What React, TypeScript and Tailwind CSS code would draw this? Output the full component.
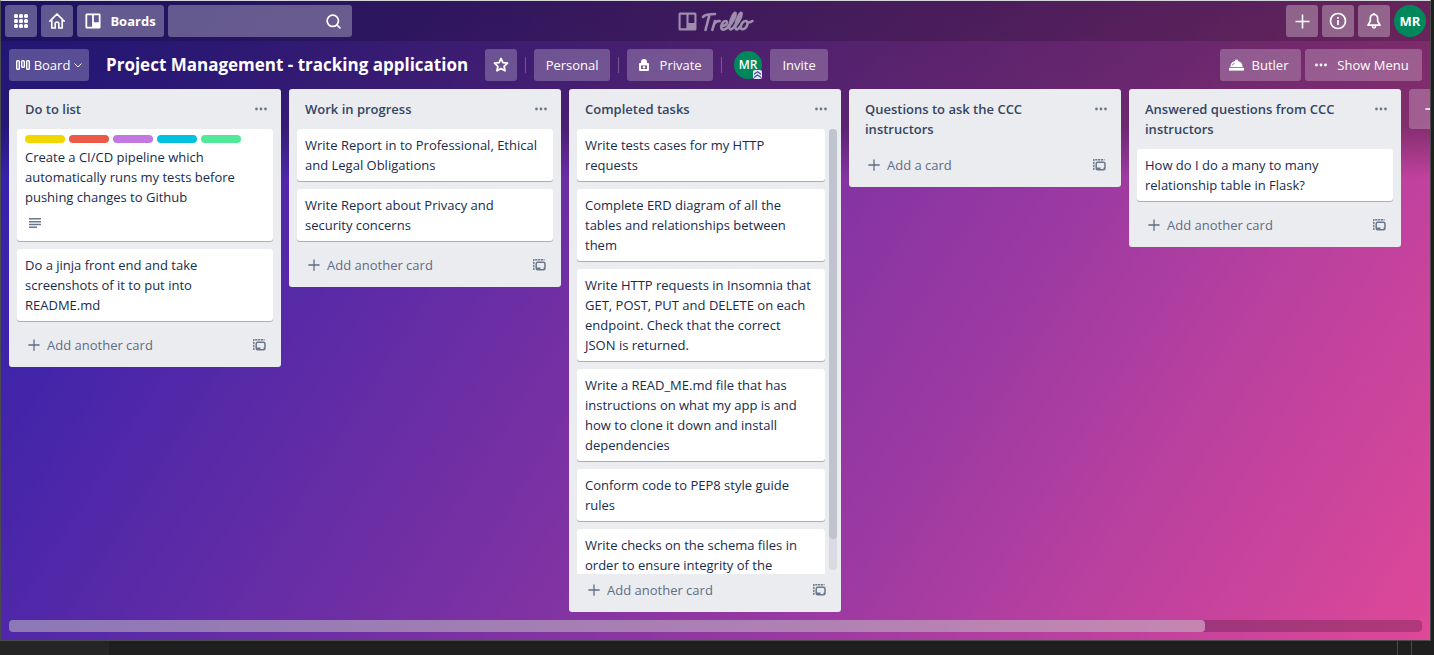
import React from "react";
import { Search } from "lucide-react";

type CardData = { text: string; labels?: string[]; description?: boolean };
type ListData = { title: string; cards: CardData[]; scroll?: boolean };

const lists: ListData[] = [
  {
    title: "Do to list",
    cards: [
      {
        text: "Create a CI/CD pipeline which automatically runs my tests before pushing changes to Github",
        labels: ["bg-[#f2d600]", "bg-[#eb5a46]", "bg-[#c377e0]", "bg-[#00c2e0]", "bg-[#51e898]"],
        description: true,
      },
      { text: "Do a jinja front end and take screenshots of it to put into README.md" },
    ],
  },
  {
    title: "Work in progress",
    cards: [
      { text: "Write Report in to Professional, Ethical and Legal Obligations" },
      { text: "Write Report about Privacy and security concerns" },
    ],
  },
  {
    title: "Completed tasks",
    scroll: true,
    cards: [
      { text: "Write tests cases for my HTTP requests" },
      { text: "Complete ERD diagram of all the tables and relationships between them" },
      { text: "Write HTTP requests in Insomnia that GET, POST, PUT and DELETE on each endpoint. Check that the correct JSON is returned." },
      { text: "Write a READ_ME.md file that has instructions on what my app is and how to clone it down and install dependencies" },
      { text: "Conform code to PEP8 style guide rules" },
      { text: "Write checks on the schema files in order to ensure integrity of the" },
    ],
  },
  { title: "Questions to ask the CCC instructors", cards: [] },
  {
    title: "Answered questions from CCC instructors",
    cards: [{ text: "How do I do a many to many relationship table in Flask?" }],
  },
];

function Plus({ className }: { className: string }) {
  return (
    <svg className={className} viewBox="0 0 16 16" fill="none" stroke="currentColor" strokeWidth="1.7" aria-hidden="true">
      <path d="M8 .5v15M.5 8h15" />
    </svg>
  );
}

function Dots({ className }: { className: string }) {
  return (
    <svg className={className} viewBox="0 0 14 4" fill="currentColor" aria-hidden="true">
      <circle cx="2.5" cy="2" r="1.4" />
      <circle cx="7" cy="2" r="1.4" />
      <circle cx="11.5" cy="2" r="1.4" />
    </svg>
  );
}

function BoardMark({ className }: { className: string }) {
  return (
    <svg className={className} viewBox="0 0 18 18" fill="currentColor" aria-hidden="true">
      <path fillRule="evenodd" d="M2 .5h14A1.5 1.5 0 0 1 17.500 2v14a1.5 1.5 0 0 1-1.500 1.500H2A1.5 1.5 0 0 1 .5 16V2A1.500 1.500 0 0 1 2 .5ZM2.500 2.500v13H8v-13Zm7.500 0v8h5.500v-8Z" />
    </svg>
  );
}

function TemplateIcon() {
  return (
    <svg className="h-3 w-[13px]" viewBox="0 0 13 12" fill="none" stroke="currentColor" aria-hidden="true">
      <rect x="3.200" y="3.200" width="8.800" height="7.600" rx="1.500" strokeWidth="1.500" />
      <path d="M3.200 9.500h4.300M10.500 9.500h1.500" strokeWidth="2.200" />
      <path d="M.8 11V.8h10.700" strokeWidth="1.400" strokeDasharray="2.200 .7" />
    </svg>
  );
}

function Card({ card }: { card: CardData }) {
  return (
    <li className="shrink-0 rounded-[3px] bg-white py-[6px] pr-3 pl-2 shadow-[0_1px_0_rgba(9,30,66,0.3)]">
      {card.labels && (
        <div className="flex gap-1 pb-1">
          {card.labels.map((c) => (
            <span key={c} className={`h-2 w-10 rounded-full ${c}`} />
          ))}
        </div>
      )}
      <a href="#card" className="block">{card.text}</a>
      {card.description && (
        <div className="flex h-7 items-center px-1 pt-1 text-[#6b778c]">
          <svg className="h-[10px] w-3" viewBox="0 0 12 10" fill="currentColor" aria-hidden="true">
            <path d="M0 0h12v1.500H0zM0 3h12v1.500H0zM0 5.700h12v1.500H0zM0 8.500h8V10H0z" />
          </svg>
        </div>
      )}
    </li>
  );
}

const footerBase = "flex shrink-0 items-start justify-between pr-[15px] pl-[19px]";

function List({ list }: { list: ListData }) {
  const roomy = list.cards.length > 0 && !list.scroll;
  return (
    <section className="flex max-h-full w-[272px] shrink-0 flex-col rounded-[3px] bg-[#ebecf0] text-[#172b4d]">
      <header className="flex items-start py-[10px] pr-3 pl-4">
        <h2 className="flex-1 pr-6 font-semibold text-[#344563]">{list.title}</h2>
        <button aria-label="List actions" className="flex h-5 w-4 items-center justify-center text-[#6b778c]">
          <Dots className="h-1 w-[14px]" />
        </button>
      </header>
      <div className={list.scroll ? "flex min-h-0 gap-1 pr-1" : "flex min-h-0 pr-2"}>
        <ul className={list.cards.length ? "flex min-w-0 flex-1 flex-col gap-2 overflow-hidden pb-[1px] pl-2" : "hidden"}>
          {list.cards.map((c) => (
            <Card key={c.text} card={c} />
          ))}
        </ul>
        {list.scroll && (
          <div className="mb-1 w-2 shrink-0 rounded-full bg-[#dadbe2]">
            <div className="h-[93%] rounded-full bg-[#bfc4ce]" />
          </div>
        )}
      </div>
      <footer className={roomy ? `${footerBase} h-[45px] pt-[13px]` : `${footerBase} h-[38px] pt-[6px]`}>
        <button className="flex items-center gap-[7px] text-[#5e6c84]">
          <Plus className="h-3 w-3" />
          {list.cards.length ? "Add another card" : "Add a card"}
        </button>
        <button aria-label="Create from template" className="flex h-5 items-center text-[#6b778c]">
          <TemplateIcon />
        </button>
      </footer>
    </section>
  );
}

const headerButton = "flex h-8 shrink-0 items-center justify-center rounded-[3px] bg-white/30 text-white";
const boardButton = "flex h-8 shrink-0 items-center justify-center rounded-[3px] bg-white/24 text-white";

export default function App() {
  return (
    <div className="flex h-screen flex-col overflow-hidden bg-[#1f1f1f] font-['Open_Sans',sans-serif] text-[13px] leading-5">
      <div className="mr-[3px] flex min-h-0 flex-1 flex-col border-t border-r border-b border-l border-[#4b4b4b] border-t-[#d5d5dc] bg-[linear-gradient(180deg,rgba(0,0,0,0.34)_0,rgba(0,0,0,0.3)_125px,rgba(0,0,0,0)_178px),linear-gradient(122deg,#3020ac_0%,#4024aa_13%,#5a2aa7_28%,#7630a3_44%,#9e3aa2_67%,#b8409f_79%,#de4898_100%)]">
        <header className="flex h-10 shrink-0 items-center justify-between bg-black/15 px-1">
          <div className="flex flex-1 gap-1">
            <button aria-label="More from Atlassian" className={`${headerButton} w-8`}>
              <svg className="h-[14px] w-[14px]" viewBox="0 0 14 14" fill="currentColor" aria-hidden="true">
                {[2, 7, 12].map((y) => [2, 7, 12].map((x) => <rect key={`${x}-${y}`} x={x - 2} y={y - 2} width="4" height="4" rx="1.500" />))}
              </svg>
            </button>
            <button aria-label="Home" className={`${headerButton} w-8`}>
              <svg className="h-4 w-4" viewBox="0 0 16 16" fill="none" stroke="currentColor" strokeWidth="1.700" strokeLinejoin="round" strokeLinecap="round" aria-hidden="true">
                <path d="M.9 8.200 8 1l7.100 7.200M2.800 7v8h3.400v-4.200a1.800 1.800 0 0 1 3.600 0V15h3.400V7" />
              </svg>
            </button>
            <button className={`${headerButton} w-[87px] gap-[9px] font-bold`}>
              <BoardMark className="h-4 w-4" />
              Boards
            </button>
            <label className="flex h-8 w-[184px] items-center rounded-[3px] bg-white/30 pr-[10px] text-white">
              <input aria-label="Search" className="min-w-0 flex-1 bg-transparent px-2 outline-none" />
              <Search className="h-[17px] w-[17px]" strokeWidth={2.4} />
            </label>
          </div>
          <a href="#home" aria-label="Trello" className="flex h-8 items-center gap-1 text-white opacity-50">
            <BoardMark className="h-[19px] w-[19px]" />
            <svg className="h-[22px] w-[53px]" viewBox="0 0 53 22" fill="none" stroke="currentColor" strokeWidth="2.600" strokeLinecap="round" strokeLinejoin="round" aria-hidden="true">
              <path d="M2 7c1-1.600 3-2.200 5.500-2.500L14 4M8.500 4.700 4.500 20" />
              <path d="m14 11-2.700 8.800M13 14.300c1.600-2.400 3.400-3.800 5.700-3.200" />
              <path d="M20 16.300c3 0 6-1.800 6-3.900 0-1.900-2.600-1.700-4.200.2-2.100 2.600-2.200 7 .6 7 2.300 0 4.300-2.100 6-4.600" />
              <path d="M28 16.500c3.500-4 7.300-10.500 6.500-13.500-1.600-1.200-4.800 6.500-5.800 11-.9 4.500.2 6.500 2.300 5 1.300-.9 2.400-2.400 3.300-4" />
              <path d="M34 16.500c3.500-4 7.300-10.500 6.500-13.500-1.600-1.200-4.800 6.500-5.800 11-.9 4.500.2 6.500 2.300 5 .9-.6 1.600-1.500 2.200-2.500" />
              <path d="M45.500 11.200c-3-.9-6.200 3.300-5.700 6.300.5 2.600 3.600 2.300 5.300-.2 1.700-2.400 1.900-5.300.4-6.100.7 1.700 3.300 1.600 6-.2" />
            </svg>
          </a>
          <div className="flex flex-1 items-center justify-end gap-1">
            <button aria-label="Create" className={`${headerButton} w-8`}><Plus className="h-[15px] w-[15px]" /></button>
            <button aria-label="Information" className={`${headerButton} w-8`}>
              <svg className="h-[18px] w-[18px]" viewBox="0 0 18 18" fill="none" stroke="currentColor" strokeWidth="1.700" aria-hidden="true">
                <circle cx="9" cy="9" r="7.500" />
                <path d="M9 8v5M9 5v1.700" />
              </svg>
            </button>
            <button aria-label="Notifications" className={`${headerButton} w-8`}>
              <svg className="h-4 w-4" viewBox="0 0 16 16" fill="none" stroke="currentColor" strokeWidth="1.700" strokeLinejoin="round" aria-hidden="true">
                <path d="M8 1.500c-2.500 0-3.700 1.900-3.700 4.200v2.500L2 12.200h12l-2.300-4V5.700C11.700 3.400 10.500 1.500 8 1.500Z" />
                <path d="M6.300 13.200c.4 2.200 3 2.200 3.400 0M8 0v2" />
              </svg>
            </button>
            <button aria-label="Account" className="flex h-8 w-8 items-center justify-center rounded-full bg-[#00875a] font-bold text-white">MR</button>
          </div>
        </header>

        <nav className="flex h-12 shrink-0 items-center px-2 text-white">
          <button className={`${boardButton} w-20 gap-1`}>
            <svg className="h-[11px] w-[14px]" viewBox="0 0 14 11" fill="none" stroke="currentColor" strokeWidth="1.400" aria-hidden="true">
              <rect x=".7" y=".7" width="2.600" height="8.600" rx=".8" />
              <rect x="5.700" y=".7" width="2.600" height="6.600" rx=".8" />
              <rect x="10.700" y=".7" width="2.600" height="8.600" rx=".8" />
            </svg>
            Board
            <svg className="h-[5px] w-2" viewBox="0 0 8 5" fill="none" stroke="currentColor" aria-hidden="true"><path d="m.5.5 3.500 3.500L7.500.5" /></svg>
          </button>
          <h1 className="mr-[17px] ml-[17px] text-[17px] font-bold whitespace-nowrap">Project Management - tracking application</h1>
          <button aria-label="Star board" className={`${boardButton} w-8`}>
            <svg className="h-4 w-4" viewBox="0 0 16 16" fill="none" stroke="currentColor" strokeWidth="1.800" strokeLinejoin="round" aria-hidden="true">
              <path d="m8 1.500 1.900 4.200 4.600.5-3.400 3.100.9 4.500L8 11.500l-4 2.300.9-4.500-3.400-3.100 4.600-.5Z" />
            </svg>
          </button>
          <span className="mx-2 h-4 w-px bg-white/25" />
          <button className={`${boardButton} w-[76px]`}>Personal</button>
          <span className="mx-2 h-4 w-px bg-white/25" />
          <button className={`${boardButton} w-[86px] gap-[11px]`}>
            <svg className="h-3 w-[10px]" viewBox="0 0 10 12" fill="currentColor" aria-hidden="true">
              <path fillRule="evenodd" d="M2 4V3a3 3 0 0 1 6 0v1h1a1 1 0 0 1 1 1v6a1 1 0 0 1-1 1H1a1 1 0 0 1-1-1V5a1 1 0 0 1 1-1Zm0 2.500v3.500h6V6.500Z" />
              <circle cx="5" cy="8.200" r="1.200" />
            </svg>
            Private
          </button>
          <span className="mx-2 h-4 w-px bg-white/25" />
          <button aria-label="Board member" className="relative ml-1 flex h-7 w-7 shrink-0 items-center justify-center rounded-full bg-[#00875a] text-[12px] font-semibold">
            MR
            <svg className="absolute right-0 bottom-0 h-[9px] w-[9px]" viewBox="0 0 9 9" fill="none" stroke="#3f4ba0" strokeWidth="1.200" aria-hidden="true">
              <rect width="9" height="9" rx="2" fill="#e8e9f8" stroke="none" />
              <path d="m1 4.200 3.500-2.500L8 4.200M1 7.500 4.500 5 8 7.500" />
            </svg>
          </button>
          <button className={`${boardButton} ml-2 w-[58px]`}>Invite</button>
          <div className="ml-auto flex gap-1">
            <button className={`${boardButton} w-[81px] gap-2 pr-1`}>
              <svg className="h-[14px] w-[15px]" viewBox="0 0 16 14" fill="currentColor" aria-hidden="true">
                <path d="M1.500 9a6.500 6.500 0 0 1 5-6.300V1.500h3v1.200a6.500 6.500 0 0 1 5 6.300Z" />
                <path d="M0 10h16v3H0z" />
                <path d="M3.500 7.500A4 4 0 0 1 6 5" stroke="#9a5a94" fill="none" />
              </svg>
              Butler
            </button>
            <button className={`${boardButton} w-[117px] gap-[9px] pr-1`}>
              <Dots className="h-1 w-[14px]" />
              Show Menu
            </button>
          </div>
        </nav>

        <main className="flex min-h-0 flex-1 items-start gap-2 overflow-hidden px-2 pb-2">
          {lists.map((l) => <List key={l.title} list={l} />)}
          <button aria-label="Add another list" className="flex h-10 w-[272px] shrink-0 items-center rounded-[3px] bg-white/24 pl-4 text-white">
            <Plus className="h-3 w-3" />
          </button>
        </main>
        <div className="mx-2 mb-2 h-3 shrink-0 rounded bg-black/20">
          <div className="h-full w-11/13 rounded bg-white/40" />
        </div>
      </div>
      <div className="flex h-[14px] shrink-0 justify-between">
        <span className="w-[109px] bg-[#252525]" />
        <span className="mr-[22px] w-[15px] border-r border-l border-[#4a4a4a]" />
      </div>
    </div>
  );
}
